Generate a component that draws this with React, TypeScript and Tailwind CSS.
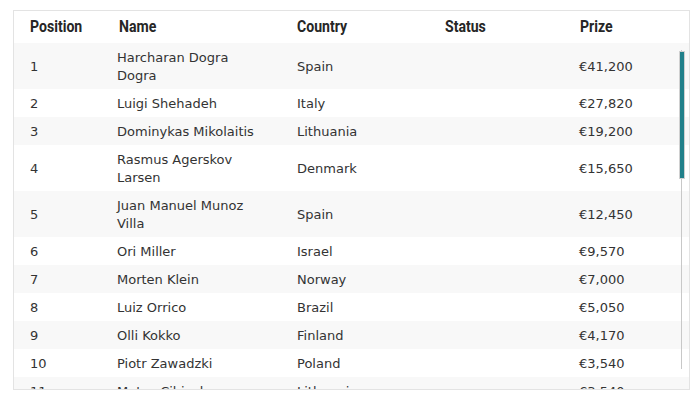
import React from "react";

type Player = {
  position: number;
  name: string;
  country: string;
  status: string;
  prize: string;
};

const players: Player[] = [
  { position: 1, name: "Harcharan Dogra Dogra", country: "Spain", status: "", prize: "€41,200" },
  { position: 2, name: "Luigi Shehadeh", country: "Italy", status: "", prize: "€27,820" },
  { position: 3, name: "Dominykas Mikolaitis", country: "Lithuania", status: "", prize: "€19,200" },
  { position: 4, name: "Rasmus Agerskov Larsen", country: "Denmark", status: "", prize: "€15,650" },
  { position: 5, name: "Juan Manuel Munoz Villa", country: "Spain", status: "", prize: "€12,450" },
  { position: 6, name: "Ori Miller", country: "Israel", status: "", prize: "€9,570" },
  { position: 7, name: "Morten Klein", country: "Norway", status: "", prize: "€7,000" },
  { position: 8, name: "Luiz Orrico", country: "Brazil", status: "", prize: "€5,050" },
  { position: 9, name: "Olli Kokko", country: "Finland", status: "", prize: "€4,170" },
  { position: 10, name: "Piotr Zawadzki", country: "Poland", status: "", prize: "€3,540" },
  { position: 11, name: "Matas Cibinskas", country: "Lithuania", status: "", prize: "€3,540" },
];

const headers = [
  { label: "Position", pad: "pl-[16px]" },
  { label: "Name", pad: "pl-[19px]" },
  { label: "Country", pad: "pl-[17px]" },
  { label: "Status", pad: "pl-[17px]" },
  { label: "Prize", pad: "pl-[18px]" },
];

const App: React.FC = () => {
  return (
    <div className="w-[700px] h-[409px] bg-white pt-[10px] pl-[13px]">
      <div className="relative w-[677px] h-[380px] border border-[#e3e3e3] overflow-hidden bg-white">
        <table className="table-fixed w-full border-collapse">
          <colgroup>
            <col className="w-[86px]" />
            <col className="w-[180px]" />
            <col className="w-[148px]" />
            <col className="w-[134px]" />
            <col />
          </colgroup>
          <thead>
            <tr className="h-[32px] text-left text-[16px] text-[#262626] font-['Roboto',sans-serif]">
              {headers.map((h) => (
                <th key={h.label} className={"align-middle font-bold " + h.pad}>
                  <span className="inline-block origin-left scale-x-[0.88] whitespace-nowrap">
                    {h.label}
                  </span>
                </th>
              ))}
            </tr>
          </thead>
          <tbody className="text-[13px] leading-[18px] text-[#333] font-['DejaVu_Sans',sans-serif]">
            {players.map((p, i) => (
              <tr key={p.position} className={i % 2 === 0 ? "bg-[#f8f8f8]" : "bg-white"}>
                <td className="pl-[16px] pt-[6px] pb-[4px] align-middle">{p.position}</td>
                <td className="pl-[17px] pr-[15px] pt-[6px] pb-[4px] align-middle">{p.name}</td>
                <td className="pl-[17px] pt-[6px] pb-[4px] align-middle">{p.country}</td>
                <td className="pl-[17px] pt-[6px] pb-[4px] align-middle">{p.status}</td>
                <td className="pl-[17px] pt-[6px] pb-[4px] align-middle">{p.prize}</td>
              </tr>
            ))}
          </tbody>
        </table>

        {/* scrollbar overlay */}
        <div className="absolute left-[667px] top-[39px] w-px h-[319px] bg-[#c8c8c8]" />
        <div className="absolute left-[665px] top-[40px] w-[6px] h-[128px] bg-[#21808a] border border-[#d0d0d0]" />
      </div>
    </div>
  );
};

export default App;
